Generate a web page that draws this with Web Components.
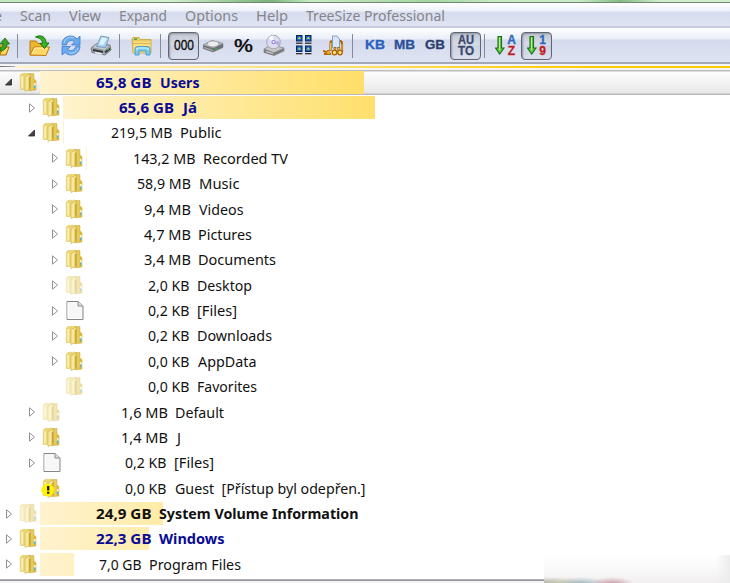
<!DOCTYPE html>
<html lang="cs">
<head>
<meta charset="utf-8">
<title>TreeSize Professional</title>
<style>
    body {
        margin: 0;
        width: 730px;
        height: 583px;
        overflow: hidden;
        background: #fff;
        font-family: "Noto Sans", "Open Sans", sans-serif;
        font-size: 14.5px;
    }
</style>
</head>
<body>
<tree-size-app></tree-size-app>

<script>
const toolIcons = {
    up: `<path d="M0 11 L7 11 L7 21 L0 21Z" fill="#e8a91c"/><path d="M0 20 L4 13 L9 13 L6 21 L0 21Z" fill="#ffd75a" stroke="#a8690c"/><path d="M0 10 L5 4 L9.5 10 L7 10 C7 14 4 17 0 17 L0 14 C2 13 3 12 3 10Z" fill="#3aa51e" stroke="#17660d" stroke-width=".8"/>`,
    open: `<path d="M1 21 L1 7 L7 7 L9 9.500 L16 9.500 L16 21Z" fill="#efb52d" stroke="#b97a12"/><path d="M1 21 L5 13 L20.500 13 L17 21.500Z" fill="#ffd965" stroke="#bf7d10"/><path d="M3 20 L6 14 L18 14" fill="none" stroke="#fff3ae"/><path d="M6.500 3 C12 0 17 3 17 9 L20 9 L15.500 14.500 L11 9.500 L13.700 9 C13.500 6 11 4 6.500 3Z" fill="#37b51f" stroke="#14650d" stroke-width=".9"/>`,
    refresh: `<path d="M1 11 C1 4 6 2 10 2 C13 2 15 4 16 5 L19 2 L19 11 L10.500 11 L13.500 8 C11 5.500 6.500 6 5.500 11Z" fill="#67a8ee" stroke="#3f7cc6" stroke-width=".8"/><path d="M19 12 C19 18 14 21 10 21 C7 21 5 19.500 4 18.500 L1 21 L1 12.500 L9.500 12.500 L6.700 15.200 C9 17.500 13.500 17 15 12Z" fill="#6aabf1" stroke="#3f7cc6" stroke-width=".8"/><path d="M3 9 C4 4 9 2 13 4 M17 14 C16 18 12 20 8 19" fill="none" stroke="#b5dafb" stroke-width="1"/>`,
    print: `<path d="M1 14 L6 10 L20 11 L21 16 L15 21 L2 18.500Z" fill="#a5a9b0" stroke="#656a73" stroke-width=".8"/><path d="M1.500 13.500 L7 9.500 L20 11.500 L14.500 16.500Z" fill="#c3c7cf" stroke="#858993" stroke-width=".7"/><path d="M6.500 12.500 L11 2 L19 3.500 L15.500 13.500Z" fill="#a9d4f6" stroke="#6e8dac" stroke-width=".8"/><path d="M12 3.500 L17 4.500 L13 11 L9 10.500Z" fill="#e0f2ff"/><path d="M3 16 L13 18 M15 18.500 L20 14.500" stroke="#33363d" stroke-width="1.800"/><path d="M5 18.500 L12 20" stroke="#f0f2f4" stroke-width="1.500"/><rect x="17" y="14" width="2" height="1.500" fill="#5fce4c"/>`,
    explorer: `<path d="M1 5 L2 3.500 L8 3.500 L9.500 5.500 L20 5.500 L20 19 L2 19Z" fill="#e6c965" stroke="#c5a23e" stroke-width=".8"/><rect x="2.500" y="7.500" width="17" height="11" fill="#fbdd7c"/><path d="M2 9.500H20" stroke="#d3b75e"/><rect x="3" y="4.500" width="3" height="1.500" fill="#40a84a"/><path d="M4 21 L4 15 Q4 12.500 7 12.500 L16 12.500 Q19 12.500 19 15 L19 21 L15 21 L15 17 L8 17 L8 21Z" fill="#7bcaf1" stroke="#4598c8" stroke-width=".9"/><path d="M5.500 16 Q5.500 14 8 14 H15 Q17.500 14 17.500 16" fill="none" stroke="#d7f4ff" stroke-width="1.200"/>`,
    drive: `<path d="M0 11 L9 6.500 L20 9.500 L20 13.500 L10 18 L0 14.500Z" fill="#6c6f73" stroke="#808080" stroke-width=".6"/><path d="M0 11 L9 6.500 L20 9.500 L10.500 14Z" fill="#bbbcbe" stroke="#8f9193" stroke-width=".6"/><ellipse cx="10" cy="9.700" rx="5" ry="2.300" fill="#ededed"/><path d="M1 13 L10 16 L10 17 L1 14Z" fill="#b8b9bb"/><rect x="12" y="14" width="2.500" height="1.500" fill="#3aa845"/>`,
    cd: `<path d="M1 15 L9 11 L21 14 L21 17 L11 21.500 L1 18.500Z" fill="#7a7c80" stroke="#777" stroke-width=".6"/><path d="M1 15 L9 11 L21 14 L11 18.500Z" fill="#c6c7c9" stroke="#929396" stroke-width=".6"/><path d="M3 17.500 L10 19.500" stroke="#ddd"/><circle cx="10.500" cy="8" r="6.800" fill="#deddf0" stroke="#9998a8" stroke-width=".8"/><path d="M10.500 8 L5.500 4 A6.300 6.300 0 0 1 10 1.800Z" fill="#fff"/><path d="M10.500 8 L15.500 12 A6.300 6.300 0 0 0 16.500 7Z" fill="#b1ace7"/><circle cx="10.500" cy="8" r="2.200" fill="#a18be0"/><circle cx="10.500" cy="8" r=".9" fill="#fff"/>`,
    grid: [[1.5, 1.5], [10.5, 1.5], [1.5, 12], [10.5, 12]].map(([x, y]) =>
        `<rect x="${x}" y="${y}" width="5.500" height="5.500" fill="#1a66c9" stroke="#0c2450"/><path d="M${x + 1} ${y + 3.5}L${x + 3} ${y + 1.2}L${x + 4.5} ${y + 3.5}Z" fill="#c5dd68"/><path d="M${x - .5} ${y + 7.700}H${x + 6}" stroke="#222" stroke-width="1.200"/>`).join(''),
    filter: `<path d="M9.500 2 L14 2 L16.500 5 L16.500 14 L9.500 14Z" fill="#d5e6fa" stroke="#748dae" stroke-width=".8"/><path d="M9 7 Q7.500 7 7.500 10 L7.500 17 M17 7 Q19 7 19 10 L19 18 M12 13 L12 18 M15.500 13 L15.500 18" fill="none" stroke="#a96508" stroke-width="2.200"/><path d="M7.500 9 L7.500 16 M19 10 L19 17 M12 14V17 M15.500 14V17" stroke="#f3bd45" stroke-width="1"/><circle cx="11.500" cy="18.500" r="2.300" fill="#ffdc76" stroke="#a76005" stroke-width="1.200"/><circle cx="17" cy="18.500" r="2.300" fill="#ffdc76" stroke="#a76005" stroke-width="1.200"/><path d="M0 17 L5 18.500 L5 16 M1 20 H8" fill="none" stroke="#b46a04" stroke-width="2"/><circle cx="5.500" cy="18.500" r="1.800" fill="#eea31e"/>`,
    arrow: `<path d="M3 2.500 H6.500 V14 H9 L4.700 20 L.5 14 H3Z" fill="#63cc3f" stroke="#1c6d17" stroke-width="1.100"/><path d="M4.500 3.500V16" stroke="#baf090" stroke-width="1"/>`
};

const folderSvg = `
    <path d="M9 .5 L14 .5 L14 6 L16 7.500 L16 17 L10 17.800 L7 17Z" fill="#d9b83c" stroke="#cfb04a" stroke-width=".5"/>
    <path d="M11 1 L13.500 1 L13.500 16.500 L11 17.300Z" fill="#e6ca5a"/>
    <path d="M.3 2 L2 .5 L9 .2 L9 16.500 L.3 16.500Z" fill="#ecd674" stroke="#d9bf58" stroke-width=".5"/>
    <path d="M5 3.500 L10.500 1.200 L10.500 16 L5 18.500Z" fill="#f6e89e" stroke="#cdae45" stroke-width=".6"/>
    <path d="M8.700 4 L10.500 3 L10.500 15.500 L8.700 16.500Z" fill="#c8a831"/>
    <path d="M2.200 3V15.500" stroke="#faeeb0" stroke-width="2"/>
    <rect x="13.800" y="10" width="1.800" height="5" fill="#f8f5d8"/>
    <rect x="13.800" y="12.500" width="1.800" height="2.500" fill="#62aeb8"/>`;

const fileSvg = `
    <path d="M1 .5 H12 L17 5 V18.500 H1Z" fill="#f7f7f7" stroke="#858585"/>
    <path d="M12 .5 V5 H17" fill="#dedede" stroke="#8d8d8d"/>
    <path d="M2 1.500V17.500H16" fill="none" stroke="#fff"/>`;

const warnSvg = `<circle cx="4.800" cy="11" r="6" fill="#fff200" stroke="#fff200"/>
    <path d="M5.200 7V11.500M5.200 12.800V14.800" stroke="#111" stroke-width="2.200"/>`;

// x = left edge of the size, w = its width, nx / nw = the same for the name
const rows = [
    { level: 0, state: 'open', size: '65,8 GB', x: 96, w: 55.5, name: 'Users', nx: 159.5, nw: 39.5, bar: 324, bold: true, blue: true, selected: true },
    { level: 1, state: 'closed', size: '65,6 GB', x: 119, w: 55, name: 'Já', nx: 182.5, nw: 14, bar: 312, bold: true, blue: true },
    { level: 1, state: 'open', size: '219,5 MB', x: 110.5, w: 61.5, name: 'Public', nx: 179.5, nw: 41.5, bar: 1 },
    { level: 2, state: 'closed', size: '143,2 MB', x: 132.5, w: 62.5, name: 'Recorded TV', nx: 202.5, nw: 85, bar: 1 },
    { level: 2, state: 'closed', size: '58,9 MB', x: 137, w: 54, name: 'Music', nx: 198.5, nw: 40.5 },
    { level: 2, state: 'closed', size: '9,4 MB', x: 144, w: 47, name: 'Videos', nx: 198.5, nw: 44.5 },
    { level: 2, state: 'closed', size: '4,7 MB', x: 144, w: 47, name: 'Pictures', nx: 198, nw: 54 },
    { level: 2, state: 'closed', size: '3,4 MB', x: 144, w: 47, name: 'Documents', nx: 198, nw: 78 },
    { level: 2, state: 'closed', size: '2,0 KB', x: 148, w: 41.5, name: 'Desktop', nx: 197, nw: 55, pale: true },
    { level: 2, state: 'closed', size: '0,2 KB', x: 148, w: 41.5, name: '[Files]', nx: 197, nw: 40, file: true },
    { level: 2, state: 'closed', size: '0,2 KB', x: 148, w: 41.5, name: 'Downloads', nx: 197, nw: 75 },
    { level: 2, state: 'closed', size: '0,0 KB', x: 148, w: 41.5, name: 'AppData', nx: 197.5, nw: 58.5 },
    { level: 2, state: '', size: '0,0 KB', x: 148, w: 41.5, name: 'Favorites', nx: 197, nw: 60, pale: true },
    { level: 1, state: 'closed', size: '1,6 MB', x: 121, w: 47, name: 'Default', nx: 175, nw: 49, pale: true },
    { level: 1, state: 'closed', size: '1,4 MB', x: 121, w: 47, name: 'J', nx: 176.5, nw: 4 },
    { level: 1, state: 'closed', size: '0,2 KB', x: 125, w: 41.5, name: '[Files]', nx: 174, nw: 40, file: true },
    { level: 1, state: '', size: '0,0 KB', x: 125, w: 41.5, name: 'Guest  [Přístup byl odepřen.]', nx: 174.5, nw: 190.5, warn: true },
    { level: 0, state: 'closed', size: '24,9 GB', x: 96, w: 55.5, name: 'System Volume Information', nx: 159, nw: 199.5, bar: 123, bold: true, pale: true },
    { level: 0, state: 'closed', size: '22,3 GB', x: 96, w: 55.5, name: 'Windows', nx: 159, nw: 65.5, bar: 109, bold: true, blue: true },
    { level: 0, state: 'closed', size: '7,0 GB', x: 99, w: 42.5, name: 'Program Files', nx: 148.5, nw: 92, bar: 34 }
];

// Text squeezed to an exact width
class FitText extends HTMLElement {
    constructor() {
        super();
        this.attachShadow({ mode: 'open' });
    }

    connectedCallback() {
        const width = parseFloat(this.getAttribute('width'));
        this.shadowRoot.innerHTML = `
            <style>
                :host { display: flex; width: ${width}px; flex: none; }
                span { flex: none; white-space: pre; transform-origin: 0 50%; }
            </style>
            <span><slot></slot></span>`;
        const span = this.shadowRoot.querySelector('span');
        const natural = span.getBoundingClientRect().width;
        if (natural) span.style.transform = `scaleX(${width / natural})`;
    }
}

class MenuBar extends HTMLElement {
    constructor() {
        super();
        this.attachShadow({ mode: 'open' });
        this.shadowRoot.innerHTML = `
            <style>
                :host {
                    display: flex;
                    align-items: center;
                    box-sizing: border-box;
                    height: 25px;
                    padding-top: 1px;
                    border-bottom: 2px solid #c5cadd;
                    background: linear-gradient(#fff 0, #edf1f9 8px, #d6dcee 9px, #dfe4f4 100%);
                    color: #858588;
                    line-height: 20px;
                    overflow: hidden;
                }
                fit-text { margin-right: 18px; }
            </style>
            <fit-text width="8" style="margin-left:-6px">e</fit-text>
            <fit-text width="31">Scan</fit-text>
            <fit-text width="32">View</fit-text>
            <fit-text width="48">Expand</fit-text>
            <fit-text width="53">Options</fit-text>
            <fit-text width="32">Help</fit-text>
            <fit-text width="139">TreeSize Professional</fit-text>`;
    }
}

class ToolItem extends HTMLElement {
    constructor() {
        super();
        this.attachShadow({ mode: 'open' });
    }

    connectedCallback() {
        const icon = toolIcons[this.getAttribute('icon')];
        this.shadowRoot.innerHTML = `
            <style>
                :host {
                    display: flex;
                    align-items: center;
                    justify-content: center;
                    flex: none;
                    box-sizing: border-box;
                    height: 23px;
                    font: bold 13.5px/16px "Liberation Sans", Arial, sans-serif;
                }
                :host([pressed]) {
                    height: 28px;
                    border: 1.5px solid #626671;
                    border-radius: 4px;
                    background: linear-gradient(#c2c7d4, #d7dbe7 45%, #ccd2e2 50%, #dce1ef);
                    box-shadow: inset 1px 1px 2px #8e94a3;
                }
                :host([separator]) { width: 1px; height: 24px; background: #858a98; }
                svg { display: block; flex: none; }
            </style>
            ${icon ? `<svg width="${this.getAttribute('size') || 22}" height="23">${icon}</svg>` : ''}<slot></slot>`;
    }
}

class ToolBar extends HTMLElement {
    constructor() {
        super();
        this.attachShadow({ mode: 'open' });
        this.shadowRoot.innerHTML = `
            <style>
                :host {
                    display: flex;
                    align-items: center;
                    box-sizing: border-box;
                    height: 36px;
                    padding-top: 1px;
                    border-bottom: 2px solid #a3a8b8;
                    background: linear-gradient(#fff 0, #e9eef8 11px, #d4daec 12px, #dfe4f4 100%);
                }
                .unit { padding-bottom: 2px; -webkit-text-stroke: .3px; }
                .stack { display: flex; flex-direction: column; align-items: center; font-size: 12px; line-height: 11px; -webkit-text-stroke: .3px; }
                .sort { margin-left: 2px; }
                .mono { font: 15px/16px "Liberation Sans", sans-serif; -webkit-text-stroke: .4px #111; color: #111; padding-bottom: 1px; }
            </style>
            <tool-item icon="up" size="10" style="width:10px"></tool-item>
            <tool-item separator style="margin-left:7px"></tool-item>
            <tool-item icon="open" style="margin-left:11px;width:22px"></tool-item>
            <tool-item icon="refresh" size="20" style="margin-left:10px;width:20px"></tool-item>
            <tool-item icon="print" style="margin-left:9px;width:22px"></tool-item>
            <tool-item separator style="margin-left:7px"></tool-item>
            <tool-item icon="explorer" size="21" style="margin-left:11px;width:21px"></tool-item>
            <tool-item separator style="margin-left:8px"></tool-item>
            <tool-item pressed style="margin-left:7px;width:31px"><fit-text class="mono" width="20">000</fit-text></tool-item>
            <tool-item icon="drive" size="21" style="margin-left:4px;width:21px"></tool-item>
            <tool-item style="margin-left:10px;width:19px;color:#111;font-size:19px"><fit-text width="19">%</fit-text></tool-item>
            <tool-item icon="cd" style="margin-left:10px;width:22px"></tool-item>
            <tool-item icon="grid" size="18" style="margin-left:10px;width:18px"></tool-item>
            <tool-item icon="filter" size="21" style="margin-left:10px;width:21px"></tool-item>
            <tool-item separator style="margin-left:8px"></tool-item>
            <tool-item style="margin-left:12px;width:20px;color:#2860c0"><fit-text class="unit" width="20">KB</fit-text></tool-item>
            <tool-item style="margin-left:9px;width:21px;color:#29509a"><fit-text class="unit" width="21">MB</fit-text></tool-item>
            <tool-item style="margin-left:10px;width:20px;color:#293e6c"><fit-text class="unit" width="20">GB</fit-text></tool-item>
            <tool-item pressed style="margin-left:5px;width:31px;color:#38486d"><div class="stack"><fit-text width="16">AU</fit-text><fit-text width="16">TO</fit-text></div></tool-item>
            <tool-item separator style="margin-left:3px"></tool-item>
            <tool-item icon="arrow" size="10" style="margin-left:10px;width:21px"><div class="stack sort"><span style="color:#2e68be">A</span><span style="color:#bd1e1e">Z</span></div></tool-item>
            <tool-item pressed icon="arrow" size="10" style="margin-left:5px;width:31px"><div class="stack sort"><span style="color:#2e68be">1</span><span style="color:#bd1e1e">9</span></div></tool-item>`;
    }
}

class TreeRow extends HTMLElement {
    constructor() {
        super();
        this.attachShadow({ mode: 'open' });
    }

    connectedCallback() {
        const row = rows[this.getAttribute('index')];
        const start = 40 + row.level * 23;
        const arrow = row.state === 'open'
            ? '<path d="M6.500 2V8H.5Z" fill="#444" stroke="#222" stroke-width=".8"/>'
            : row.state === 'closed' ? '<path d="M1.500 .8V9.200L6.500 5Z" fill="#fff" stroke="#929292"/>' : '';
        this.shadowRoot.innerHTML = `
            <style>
                :host {
                    display: flex;
                    align-items: center;
                    flex: 1 1 0;
                    min-height: 0;
                    box-sizing: border-box;
                    padding-left: ${row.level * 23}px;
                    color: ${row.blue ? '#0a0a96' : '#111'};
                    font-weight: ${row.bold ? 700 : 400};
                }
                :host([selected]) {
                    background: linear-gradient(#bdbdbd 1px, #fdfdfd 2px, #e8e8e8 calc(100% - 2px), #b9b9b9 calc(100% - 1px));
                }
                .arrow { width: 15px; padding-left: 5px; flex: none; height: 10px; }
                .icon { width: 17px; flex: none; height: 19px; opacity: ${row.pale ? .48 : 1}; }
                svg { display: block; overflow: visible; }
                .content {
                    flex: 1;
                    display: flex;
                    align-items: center;
                    margin-left: 3px;
                    height: 23px;
                    line-height: 22px;
                    box-sizing: border-box;
                    padding: 0 0 1px ${row.x - start}px;
                    background: linear-gradient(to right, #fff3ce, #ffdf69 324px) no-repeat 0 0 / ${row.bar || 0}px 100%;
                }
                .name { margin-left: ${row.nx - row.x - row.w}px; }
            </style>
            <div class="arrow"><svg width="10" height="10">${arrow}</svg></div>
            <div class="icon"><svg width="17" height="19">${row.file ? fileSvg : folderSvg}${row.warn ? warnSvg : ''}</svg></div>
            <div class="content">
                <fit-text width="${row.w}">${row.size}</fit-text>
                <fit-text class="name" width="${row.nw}">${row.name}</fit-text>
            </div>`;
    }
}

class FolderTree extends HTMLElement {
    constructor() {
        super();
        this.attachShadow({ mode: 'open' });
        this.shadowRoot.innerHTML = `
            <style>
                :host { display: flex; flex-direction: column; height: 507.500px; flex: none; }
            </style>
            ${rows.map((row, i) => `<tree-row index="${i}" ${row.selected ? 'selected' : ''}></tree-row>`).join('')}`;
    }
}

class TreeSizeApp extends HTMLElement {
    constructor() {
        super();
        this.attachShadow({ mode: 'open' });
        this.shadowRoot.innerHTML = `
            <style>
                :host {
                    display: flex;
                    flex-direction: column;
                    position: relative;
                    height: 583px;
                    overflow: hidden;
                }
                .edge {
                    height: 3px;
                    flex: none;
                    box-sizing: border-box;
                    border-bottom: 1px solid #6f8672;
                    background: linear-gradient(to right, #c4e8bf, #bfe6bc 60px, #d4f0ce 170px, #78b37c 270px, #c7eac3 310px, #a5d5a2 430px, #c9ecc5 500px, #c9ebc5 580px, #85bb86 620px, #d0eecb 660px);
                }
                .stripe {
                    height: 5.500px;
                    flex: none;
                    background:
                        linear-gradient(to right, #707070, #aaa) no-repeat 0 2px / 15px 1px,
                        linear-gradient(to right, #fff2c4, #ffdf6a 45%, #ffcc00 78%) no-repeat 17px 2px / 100% 2px,
                        #f4f4f6;
                }
                .bottom { height: 6px; flex: none; background: linear-gradient(#fff 2px, #b5b5ba 2px, #8f8f95 4px, #f3f3f4 4px); }
                .ghost {
                    position: absolute;
                    right: 0;
                    bottom: 0;
                    width: 186px;
                    height: 28px;
                    background:
                        radial-gradient(ellipse 23px 8px at 68px 30px, #c48c9c, transparent),
                        radial-gradient(ellipse 25px 8px at 38px 30px, #91aabb, transparent),
                        radial-gradient(ellipse 25px 8px at 18px 30px, #c5c6a2, transparent),
                        radial-gradient(ellipse 28px 8px at 0 30px, #9a9a9d, transparent),
                        linear-gradient(to right, transparent 172px, #ececec),
                        linear-gradient(#fff, #fbfafa 12px, #f1efef);
                }
            </style>
            <div class="edge"></div>
            <menu-bar></menu-bar>
            <tool-bar></tool-bar>
            <div class="stripe"></div>
            <folder-tree></folder-tree>
            <div class="bottom"></div>
            <div class="ghost"></div>`;
    }
}

customElements.define('fit-text', FitText);
customElements.define('menu-bar', MenuBar);
customElements.define('tool-item', ToolItem);
customElements.define('tool-bar', ToolBar);
customElements.define('tree-row', TreeRow);
customElements.define('folder-tree', FolderTree);
customElements.define('tree-size-app', TreeSizeApp);
</script>
</body>
</html>
